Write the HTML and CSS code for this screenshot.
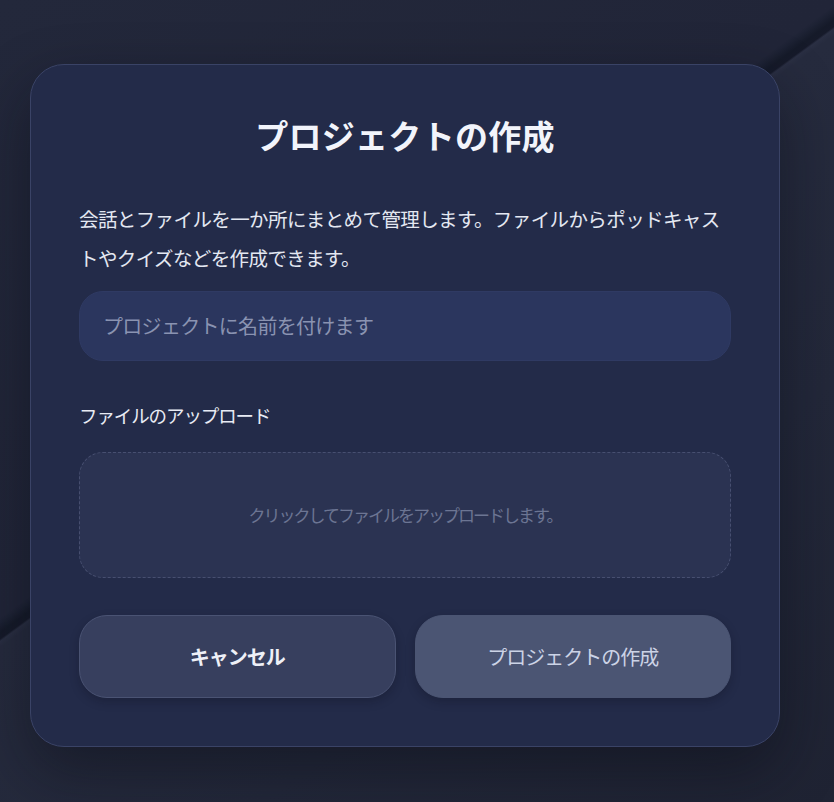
FILE: index.html
```html
<!DOCTYPE html>
<html lang="ja">
<head>
<meta charset="utf-8">
<title>プロジェクトの作成</title>
<link rel="stylesheet" href="styles.css">
</head>
<body>
<div class="backdrop">
  <div class="dialog">
    <h1 class="title">プロジェクトの作成</h1>
    <p class="desc">会話とファイルを一か所にまとめて管理します。ファイルからポッドキャストやクイズなどを作成できます。</p>
    <input class="name-input" type="text" placeholder="プロジェクトに名前を付けます">
    <div class="label">ファイルのアップロード</div>
    <div class="upload">クリックしてファイルをアップロードします。</div>
    <div class="actions">
      <button class="btn btn-cancel">キャンセル</button>
      <button class="btn btn-create">プロジェクトの作成</button>
    </div>
  </div>
</div>
</body>
</html>
```
FILE: styles.css
```css
html, body {
  margin: 0;
  padding: 0;
  height: 100%;
}
body {
  font-family: "Noto Sans CJK JP", "Noto Sans", sans-serif;
  background: #22273a;
}
.backdrop {
  height: 802px;
  box-sizing: border-box;
  padding-top: 64px;
  padding-left: 30px;
  background:
    linear-gradient(143.7deg,
      #23283b 0px, #212538 498px, #1d2234 502px, #151a29 510px, #161a2a 515px, #2a2f43 517px, #262b3e 522px, #23283a 800px, #1f2333 1140px);
}
.dialog {
  width: 750px;
  height: 683px;
  box-sizing: border-box;
  padding: 48px 48px 48px;
  background: #232b49;
  border: 1px solid #3a4366;
  border-radius: 34px;
  box-shadow: 0 24px 60px rgba(8, 10, 20, 0.45);
  display: flex;
  flex-direction: column;
}
.title {
  margin: 0;
  text-align: center;
  font-size: 33px;
  line-height: 44px;
  font-weight: 700;
  color: #f2f4fb;
  letter-spacing: 0.3px;
}
.desc {
  margin: 42px 0 0;
  font-size: 19.5px;
  line-height: 39px;
  letter-spacing: -0.6px;
  color: #e4e8f2;
}
.name-input {
  margin-top: 14px;
  height: 70px;
  box-sizing: border-box;
  border: 1px solid #2f3a63;
  border-radius: 24px;
  background: #2b365e;
  padding: 0 23px;
  font-family: inherit;
  font-size: 20px;
  letter-spacing: -0.7px;
  color: #e4e8f2;
  outline: none;
}
.name-input::placeholder {
  color: #8a93b1;
}
.label {
  margin-top: 41px;
  font-size: 18.5px;
  line-height: 27px;
  letter-spacing: -1.1px;
  color: #e8ebf4;
}
.upload {
  margin-top: 23px;
  height: 127px;
  box-sizing: border-box;
  border: 1px dashed #474f70;
  border-radius: 24px;
  background: #2b3352;
  display: flex;
  align-items: center;
  justify-content: center;
  font-size: 17px;
  letter-spacing: -2px;
  color: #6c7593;
}
.actions {
  margin-top: 37px;
  display: flex;
  gap: 19px;
}
.btn {
  flex: 1;
  height: 83px;
  border-radius: 28px;
  font-family: inherit;
  font-size: 20px;
  letter-spacing: -1px;
  cursor: pointer;
  box-shadow: 0 4px 10px rgba(10, 12, 24, 0.25);
}
.btn-cancel {
  background: #373f5e;
  border: 1px solid #4a5373;
  color: #eef0f7;
  font-weight: 700;
}
.btn-create {
  background: #4b5573;
  border: 1px solid #4b5573;
  color: #ccd3e6;
  font-weight: 400;
}
```
